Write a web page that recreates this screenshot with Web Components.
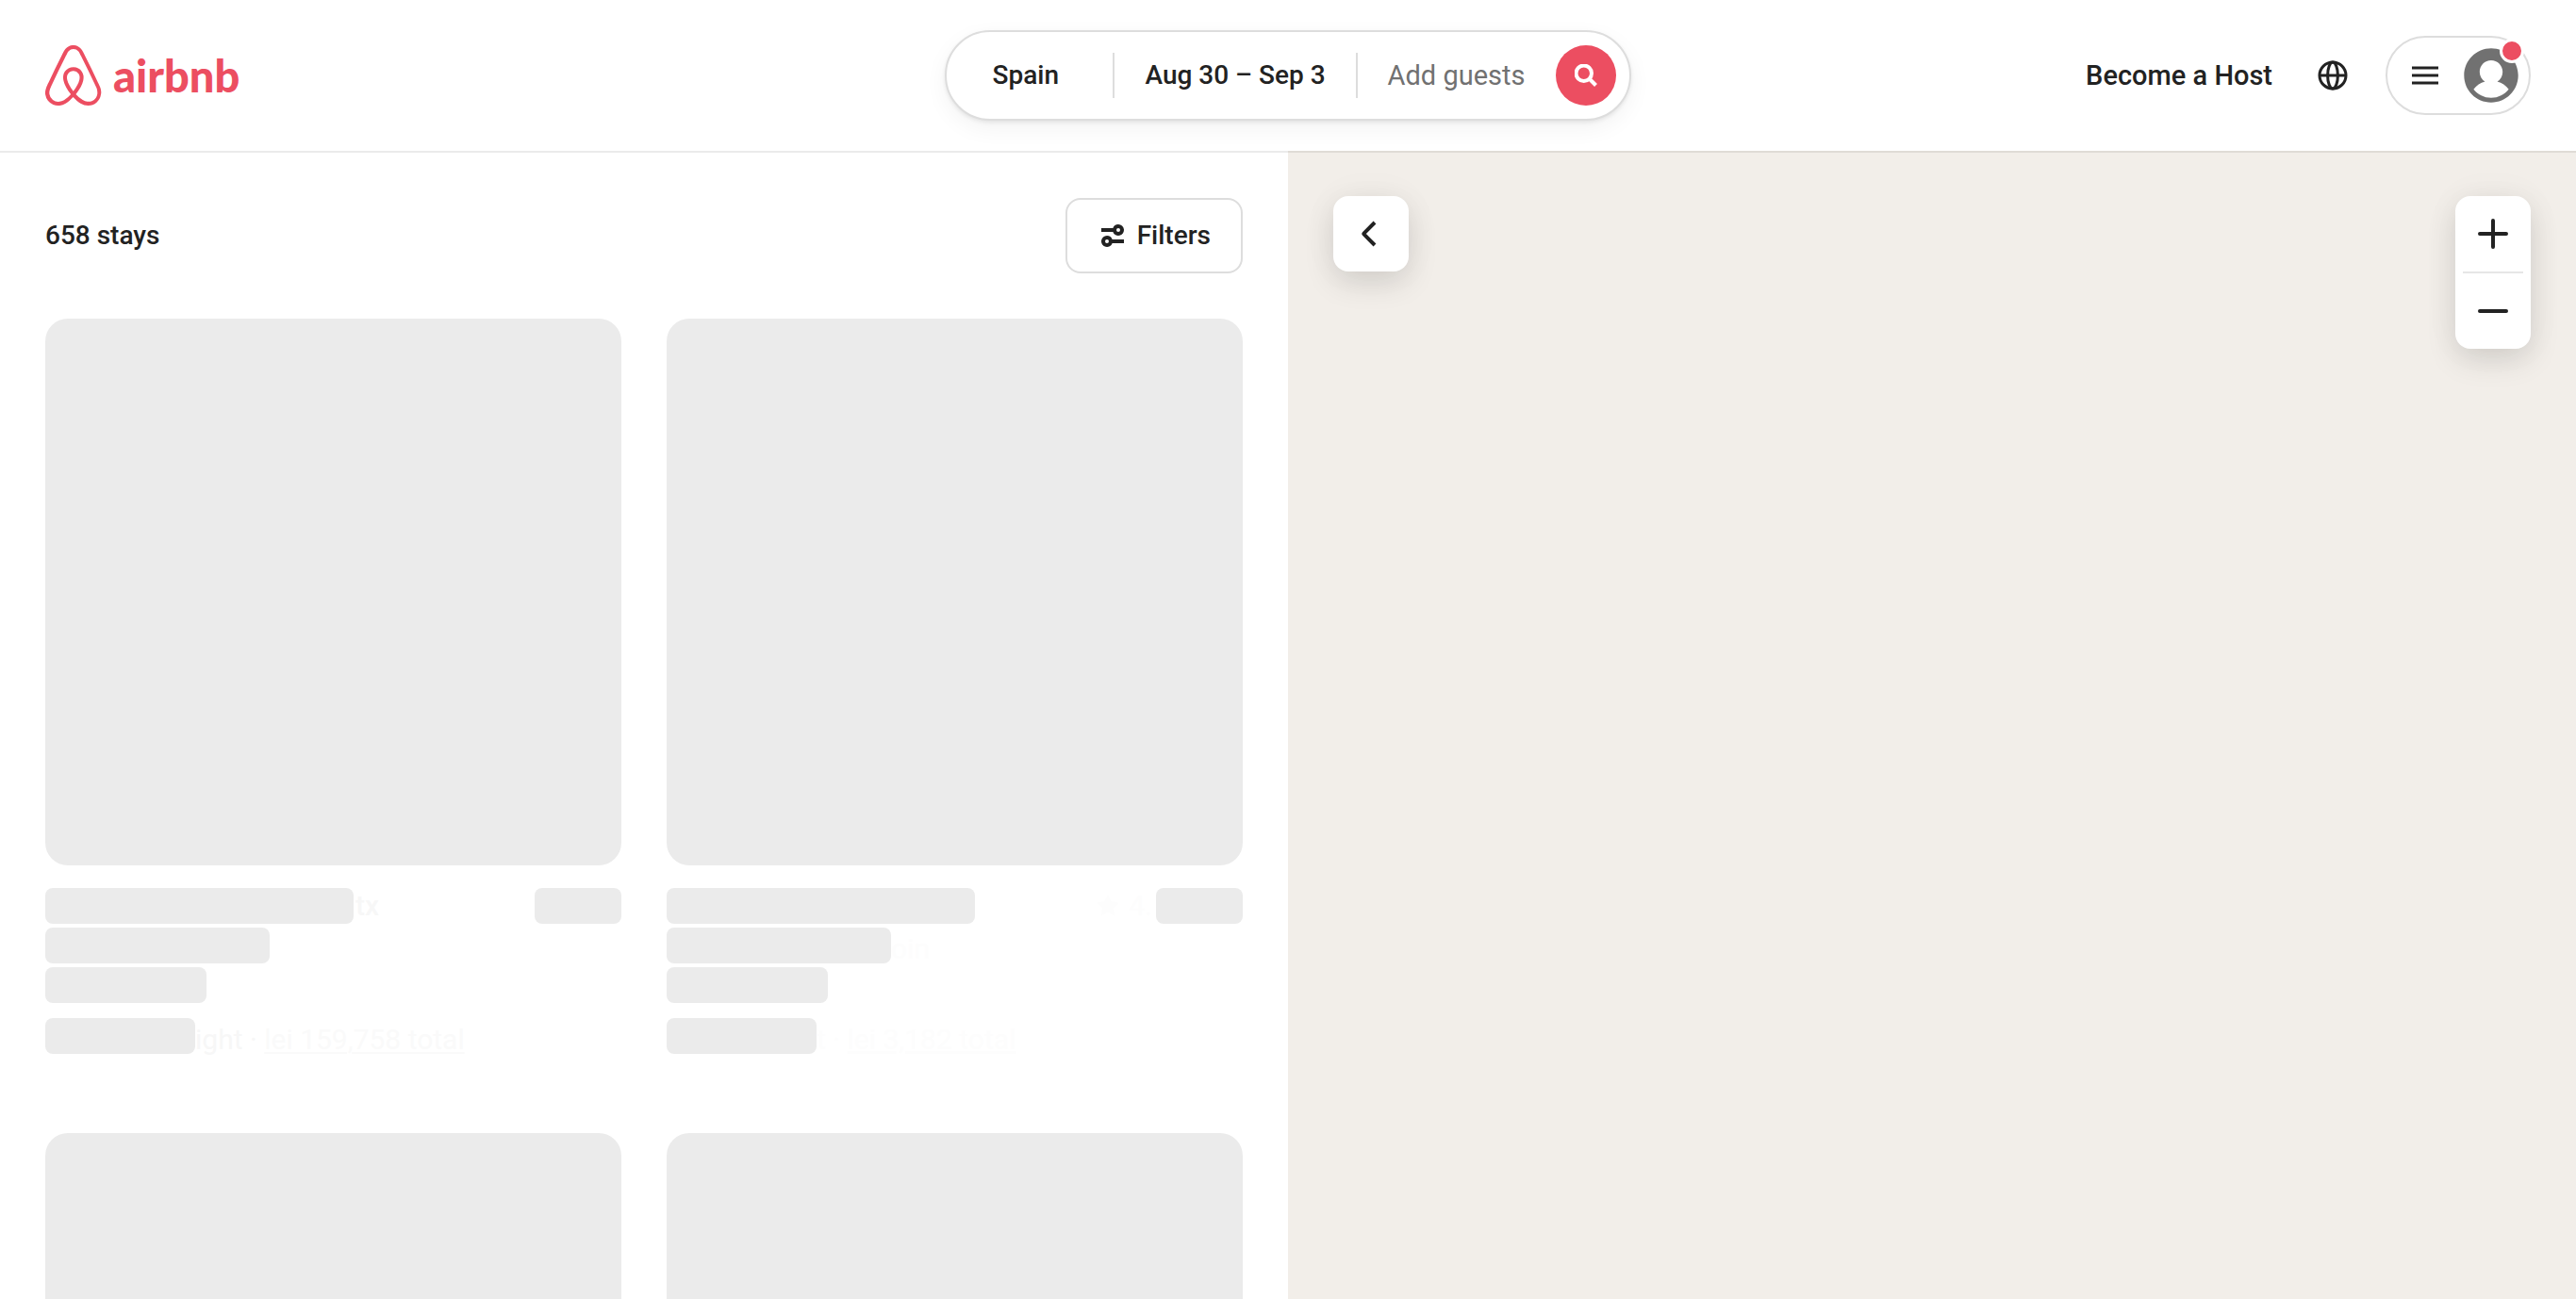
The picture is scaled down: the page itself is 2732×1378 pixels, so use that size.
<!DOCTYPE html>
<html lang="en">
<head>
<meta charset="utf-8">
<title>Airbnb – Spain</title>
<style>
  body { margin: 0; font-family: Roboto, "Liberation Sans", sans-serif; font-size: 28px; line-height: 36px; color: #222; background: #fff; }
</style>
</head>
<body>
<stays-page></stays-page>
<script>
const define = (name, html, setup) => {
  const template = document.createElement('template');
  template.innerHTML = `<style>
    *, *::before { box-sizing: border-box; }
    button { font: inherit; color: inherit; background: none; border: 0; margin: 0; padding: 0; cursor: pointer; }
    a { color: inherit; text-decoration: none; }
    svg { display: block; flex: none; }
  </style>` + html;
  customElements.define(name, class extends HTMLElement {
    constructor() {
      super();
      this.attachShadow({ mode: 'open' }).append(template.content.cloneNode(true));
      if (setup) setup(this, this.shadowRoot);
    }
  });
};

define('brand-logo', `
<style>
  :host { display: flex; }
  a { display: flex; align-items: center; gap: 12px; color: #ec4e61; }
  span { font: 900 47px/60px Lato, "Liberation Sans", sans-serif; }
</style>
<a href="#" aria-label="Airbnb homepage">
  <svg width="60" height="64" viewBox="0 0 30 32" fill="currentColor"><path d="M29.24 22.68c-.16-.39-.31-.8-.47-1.15l-.74-1.67-.03-.03c-2.2-4.8-4.55-9.68-7.04-14.48l-.1-.2c-.25-.47-.5-.99-.76-1.47-.32-.57-.63-1.18-1.14-1.76a5.3 5.3 0 00-8.2 0c-.47.58-.82 1.19-1.14 1.76-.25.52-.5 1.03-.76 1.5l-.1.2c-2.45 4.8-4.84 9.68-7.04 14.48l-.06.06c-.22.52-.48 1.06-.73 1.64-.16.35-.32.73-.48 1.15a6.8 6.8 0 007.2 9.23 8.38 8.38 0 003.18-1.1c1.3-.73 2.55-1.79 3.95-3.32 1.4 1.53 2.68 2.59 3.95 3.33A8.38 8.38 0 0022.75 32a6.79 6.79 0 006.75-5.83 5.94 5.94 0 00-.26-3.5zm-14.36 1.66c-1.72-2.2-2.84-4.22-3.22-5.95a5.2 5.2 0 01-.1-1.96c.07-.51.26-.96.52-1.34.6-.87 1.65-1.41 2.8-1.41a3.3 3.3 0 012.8 1.4c.26.4.45.84.51 1.35.1.58.06 1.25-.1 1.96-.38 1.7-1.5 3.74-3.21 5.95zm12.74 1.48a4.76 4.76 0 01-2.9 3.75c-.76.32-1.6.41-2.42.32-.8-.1-1.6-.36-2.42-.84a15.64 15.64 0 01-3.63-3.1c2.1-2.6 3.37-4.97 3.85-7.08.23-1 .26-1.9.16-2.73a5.53 5.53 0 00-.86-2.2 5.36 5.36 0 00-4.49-2.28c-1.85 0-3.5.86-4.5 2.27a5.18 5.18 0 00-.85 2.21c-.13.84-.1 1.77.16 2.73.48 2.11 1.78 4.51 3.85 7.1a14.33 14.33 0 01-3.63 3.12c-.83.48-1.62.73-2.42.83a4.76 4.76 0 01-5.32-4.07c-.1-.8-.03-1.6.29-2.5.1-.32.25-.64.41-1.02.22-.52.48-1.06.73-1.6l.04-.07c2.16-4.77 4.52-9.64 6.97-14.41l.1-.2c.25-.48.5-.99.76-1.47.26-.51.54-1 .9-1.4a3.32 3.32 0 015.09 0c.35.4.64.89.9 1.4.25.48.5 1 .76 1.47l.1.2c2.44 4.77 4.8 9.64 7 14.41l.03.03c.26.52.48 1.1.73 1.6.16.39.32.7.42 1.03.19.9.29 1.7.19 2.5z"/></svg>
  <span>airbnb</span>
</a>`);

define('search-pill', `
<style>
  :host { display: flex; align-items: center; height: 96px; padding-right: 14px; border: 2px solid #ddd; border-radius: 48px; background: #fff; box-sizing: border-box;
    box-shadow: 0 2px 4px rgba(0,0,0,.08), 0 8px 24px rgba(0,0,0,.05); font-weight: 500; }
  .field { height: 100%; padding: 0 32px; white-space: nowrap; }
  .place { min-width: 176px; padding-left: 48px; text-align: left; }
  .guests { font-size: 29px; font-weight: 400; color: #717171; }
  i { width: 2px; height: 48px; background: #ddd; }
  .go { display: grid; place-items: center; width: 64px; height: 64px; border-radius: 50%; background: #ec4e61; color: #fff; }
</style>
<button class="field place">Spain</button><i></i>
<button class="field">Aug 30 – Sep 3</button><i></i>
<button class="field guests">Add guests</button>
<button class="go" aria-label="Search"><svg width="24" height="24" viewBox="0 0 32 32" fill="none" stroke="currentColor" stroke-width="5.33"><circle cx="13" cy="13" r="11"/><path d="m21 21 9 9"/></svg></button>`);

define('user-nav', `
<style>
  :host { display: flex; justify-content: flex-end; align-items: center; }
  a { padding: 22px 24px; font-size: 29px; font-weight: 500; white-space: nowrap; }
  .globe { padding: 24px; margin-right: 16px; }
  .menu { display: flex; align-items: center; gap: 24px; padding: 10px 10px 10px 24px; border: 2px solid #ddd; border-radius: 42px; background: #fff; }
  .avatar { position: relative; color: #717171; }
  .avatar::after { content: ""; position: absolute; top: -9px; right: -5px; width: 20px; height: 20px; border: 3px solid #fff; border-radius: 50%; background: #ec4e61; }
</style>
<a href="#">Become a Host</a>
<button class="globe" aria-label="Choose a language"><svg width="32" height="32" viewBox="0 0 16 16" fill="none" stroke="currentColor" stroke-width="1.5"><circle cx="8" cy="8" r="7"/><ellipse cx="8" cy="8" rx="2.7" ry="7"/><path d="M1 8h14"/></svg></button>
<button class="menu" aria-label="Main menu">
  <svg width="32" height="32" viewBox="0 0 32 32" fill="none" stroke="currentColor" stroke-width="3"><path d="M2 8h28M2 16h28M2 24h28"/></svg>
  <span class="avatar"><svg width="60" height="60" viewBox="0 0 32 32" fill="currentColor"><path d="m16 .7c-8.437 0-15.3 6.863-15.3 15.3s6.863 15.3 15.3 15.3 15.3-6.863 15.3-15.3-6.863-15.3-15.3-15.3zm0 28c-4.021 0-7.605-1.884-9.933-4.81a12.425 12.425 0 0 1 6.451-4.4 6.507 6.507 0 0 1 -3.018-5.49c0-3.584 2.916-6.5 6.5-6.5s6.5 2.916 6.5 6.5a6.513 6.513 0 0 1 -3.019 5.491 12.42 12.42 0 0 1 6.452 4.4c-2.328 2.925-5.912 4.809-9.933 4.809z"/></svg></span>
</button>`);

define('site-header', `
<style>
  :host { display: block; position: relative; z-index: 1; box-shadow: 0 2px rgba(0,0,0,.08); background: #fff; }
  header { display: grid; grid-template-columns: minmax(0,1fr) auto minmax(0,1fr); align-items: center; height: 160px; padding: 0 48px; }
</style>
<header><brand-logo></brand-logo><search-pill></search-pill><user-nav></user-nav></header>`);

/* Placeholder card: grey bars, with the outgoing listing text still fading in the slots beside them. */
define('skeleton-card', `
<style>
  :host { display: block; font-size: 30px; color: #fdfdfd; }
  .photo { aspect-ratio: 611 / 580; border-radius: 24px; background: #ebebeb; margin-bottom: 24px; }
  .row { display: flex; height: 38px; margin-bottom: 4px; line-height: 38px; white-space: nowrap; }
  .low { line-height: 46px; }
  .price { margin-top: 16px; margin-bottom: 0; }
  b { flex: none; height: 38px; border-radius: 8px; background: #ebebeb; }
  .title { width: 327px; } .sub { width: 238px; } .dates { width: 171px; } .cost { width: 159px; } .score { width: 92px; }
  .grow { flex: 1; }
</style>
<div class="photo"></div>
<div class="row"><b class="title"></b><slot name="title"></slot><span class="grow"></span><slot name="rating"></slot><b class="score"></b></div>
<div class="row low"><b class="sub"></b><slot name="sub"></slot></div>
<div class="row"><b class="dates"></b></div>
<div class="row low price"><b class="cost"></b><slot name="price"></slot></div>`);

define('results-panel', `
<style>
  :host { display: block; padding: 50px 48px 0; box-sizing: border-box; }
  .bar { display: flex; justify-content: space-between; align-items: center; margin-bottom: 48px; }
  h1 { margin: 0; font-size: 28px; font-weight: 500; }
  .filters { display: flex; align-items: center; gap: 10px; height: 80px; padding: 0 32px; border: 2px solid #ddd; border-radius: 16px; font-weight: 500; }
  .grid { display: grid; grid-template-columns: 1fr 1fr; gap: 84px 48px; }
  .title { font-weight: 500; color: #f7f7f7; margin-left: 2px; }
  .night { color: #f7f7f7; white-space: pre; }
  .night u { color: #fafafa; text-decoration-thickness: 2px; text-underline-offset: 3px; }
  .faint { white-space: pre; }
  .rating { display: flex; align-items: center; gap: 10px; margin-right: 4px; }
</style>
<div class="bar">
  <h1>658 stays</h1>
  <button class="filters"><svg width="32" height="32" viewBox="0 0 16 16" fill="currentColor"><path d="M5 8a3 3 0 0 1 2.83 2H14v2H7.83A3 3 0 1 1 5 8zm0 2a1 1 0 1 0 0 2 1 1 0 0 0 0-2zm6-8a3 3 0 1 1-2.83 4H2V4h6.17A3 3 0 0 1 11 2zm0 2a1 1 0 1 0 0 2 1 1 0 0 0 0-2z"/></svg>Filters</button>
</div>
<div class="grid">
  <skeleton-card>
    <span slot="title" class="title">tx</span>
    <span slot="price" class="night">ight · <u>lei 159,758 total</u></span>
  </skeleton-card>
  <skeleton-card>
    <span slot="rating" class="rating"><svg width="24" height="24" viewBox="0 0 32 32" fill="currentColor"><path d="M15.1 1.6 11 9.8l-9 1.3a1 1 0 0 0-.5 1.7l6.4 6.3-1.5 8.9a1 1 0 0 0 1.4 1.1l8.2-4.3 8 4.3a1 1 0 0 0 1.5-1.1L24 19.100l6.500-6.300a1 1 0 0 0-.6-1.700l-9-1.300-4-8.200a1 1 0 0 0-1.800 0z"/></svg>4.</span>
    <span slot="sub">oin</span>
    <span slot="price" class="faint">t · <u>lei 3,182 total</u></span>
  </skeleton-card>
  <skeleton-card></skeleton-card>
  <skeleton-card></skeleton-card>
</div>`);

define('map-panel', `
<style>
  :host { display: flex; justify-content: space-between; align-items: flex-start; padding: 48px; background: #f2eee9; box-sizing: border-box; }
  .box { display: flex; flex-direction: column; align-items: center; width: 80px; border-radius: 16px; background: #fff; box-shadow: 0 0 40px rgba(0,0,0,.04), 0 12px 32px rgba(0,0,0,.12); }
  button { display: grid; place-items: center; width: 80px; height: 80px; }
  svg { fill: none; stroke: currentColor; stroke-width: 4; }
  i { width: 64px; height: 2px; background: #e6e6e6; }
</style>
<div class="box"><button aria-label="Hide map"><svg width="32" height="32" viewBox="0 0 32 32"><path d="M20 28 8.700 16.700a1 1 0 0 1 0-1.400L20 4"/></svg></button></div>
<div class="box">
  <button aria-label="Zoom in"><svg width="32" height="32" viewBox="0 0 32 32" stroke-linecap="round"><path d="M2 16h28M16 2v28"/></svg></button>
  <i></i>
  <button aria-label="Zoom out"><svg width="32" height="32" viewBox="0 0 32 32" stroke-linecap="round"><path d="M2 16h28"/></svg></button>
</div>`);

define('stays-page', `
<style>
  :host { display: flex; flex-direction: column; height: 100vh; overflow: hidden; }
  main { flex: 1; min-height: 0; display: grid; grid-template-columns: 1fr 1fr; overflow: hidden; }
  results-panel { min-height: 0; overflow: hidden; }
</style>
<site-header></site-header>
<main><results-panel></results-panel><map-panel></map-panel></main>`);
</script>
</body>
</html>
